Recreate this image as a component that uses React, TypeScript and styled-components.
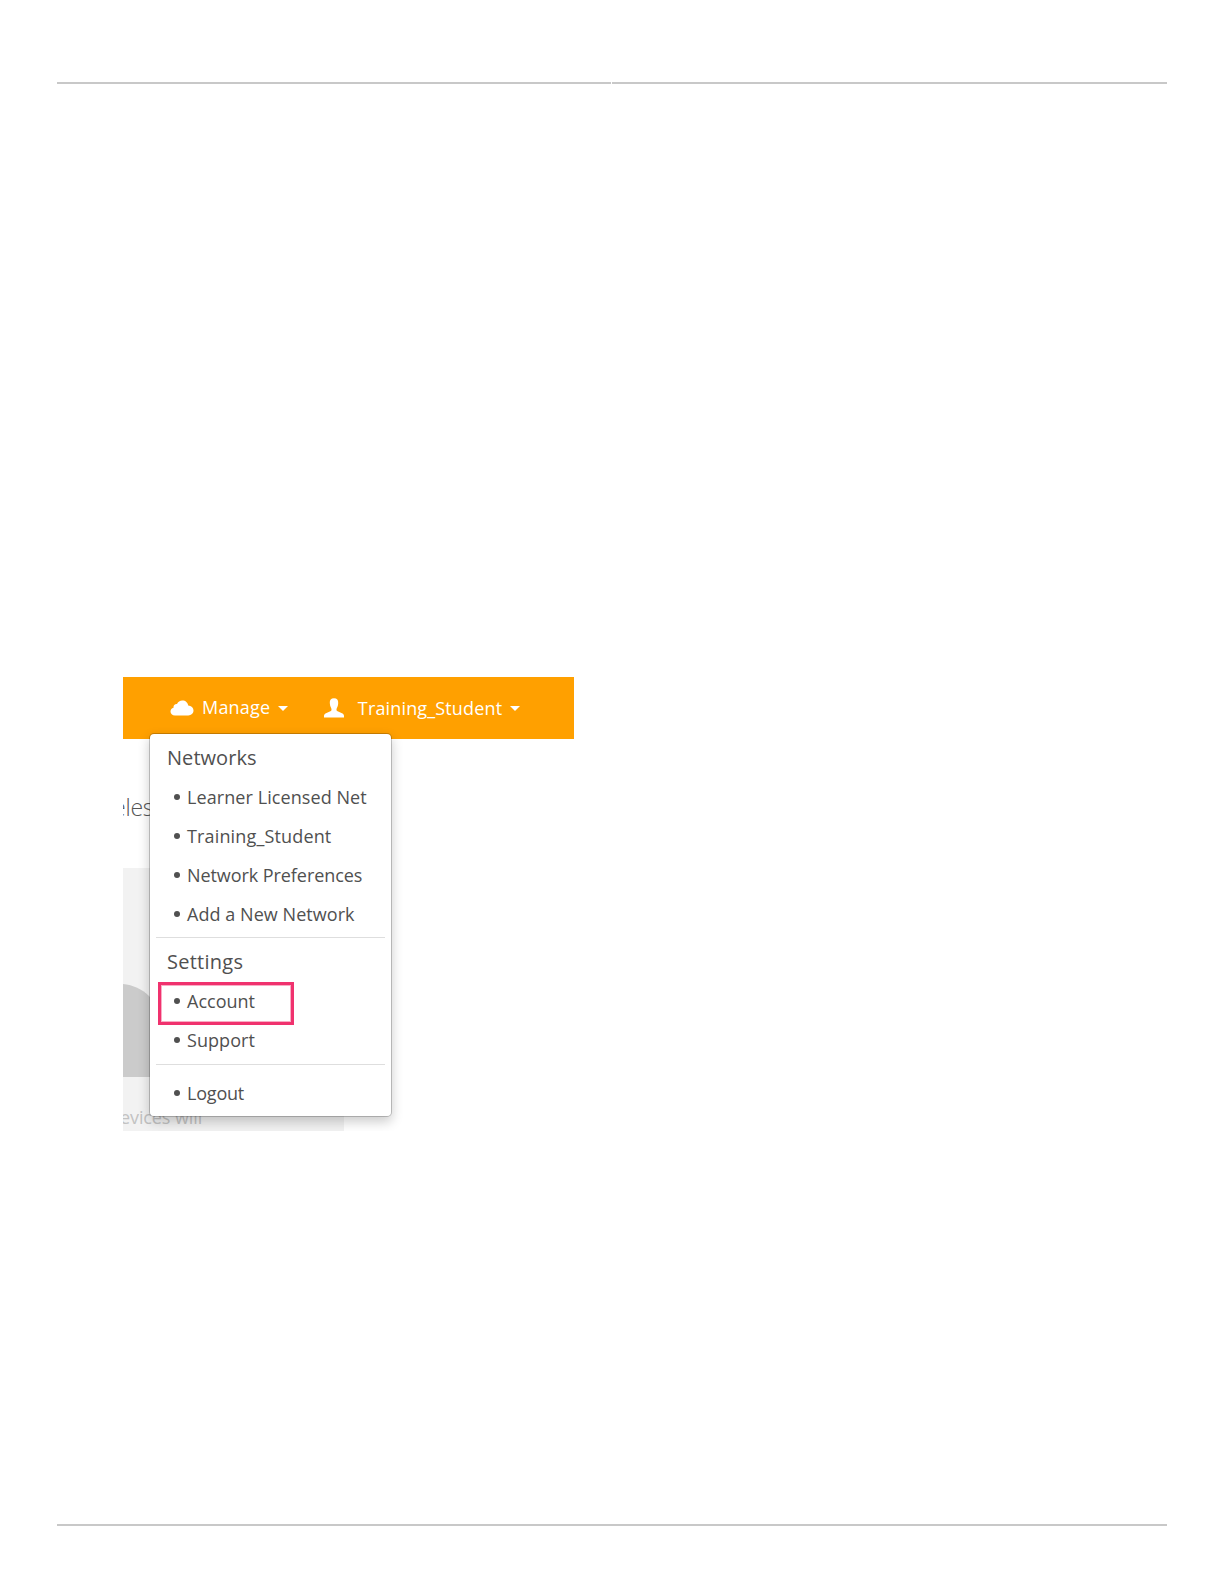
import React from "react";
import styled, { createGlobalStyle } from "styled-components";

const GlobalStyle = createGlobalStyle`
  *, *::before, *::after { box-sizing: border-box; }
  body { margin: 0; background: #fff; }
`;

const Page = styled.main`
  width: 1224px;
  height: 1584px;
  padding: 82px 57px 58px;
  display: flex;
  flex-direction: column;
  background: #fff;
  font-family: "Open Sans", "Noto Sans", sans-serif;
`;

const HeaderRule = styled.header`
  display: grid;
  grid-template-columns: 554px 1fr;
  gap: 1px;
`;

const Rule = styled.div`
  flex: 1;
  height: 2px;
  background: #c8c8c8;
`;

const Footer = styled.footer`
  display: flex;
  margin-top: auto;
`;

const Figure = styled.section`
  position: relative;
  width: 451px;
  height: 454px;
  margin: 593px 0 0 66px;
  overflow: hidden;
`;

const NavBar = styled.nav`
  display: flex;
  height: 62px;
  padding-left: 47px;
  background: #ffa000;
  color: #fff;
`;

const NavItem = styled.div<{ $left?: number; $gap: number; $top?: number }>`
  display: flex;
  align-items: center;
  height: 62px;
  margin-left: ${(p) => p.$left ?? 0}px;

  svg { display: block; flex: none; }
  span { margin: ${(p) => p.$top ?? 0}px 8px 0 ${(p) => p.$gap}px; }
`;

const NavLabel = styled.span<{ $spacing: number }>`
  padding-bottom: 2px;
  font-size: 18px;
  font-weight: 500;
  line-height: 24px;
  letter-spacing: ${(p) => p.$spacing}px;
  white-space: nowrap;
`;

const Caret = styled.i`
  border: 5px solid transparent;
  border-top-color: #fff;
  border-bottom: 0;
  margin-top: 1px;
`;

const Backdrop = styled.div`
  display: flex;
  flex-direction: column;
`;

const Heading = styled.div`
  height: 129px;
  padding-top: 53px;
  margin-left: -10px;
  font-size: 23px;
  font-weight: 300;
  line-height: 30px;
  letter-spacing: -0.2px;
  color: #555;
`;

const Panel = styled.div`
  width: 221px;
  height: 263px;
  padding-top: 116px;
  background: #f2f2f2;
  color: #c2c2c2;
  font-size: 18px;
  line-height: 24px;

  svg { display: block; }
  p { margin: 28px 0 0 -3px; letter-spacing: -0.1px; }
`;

const Menu = styled.div`
  position: absolute;
  left: 26px;
  top: 56px;
  width: 243px;
  height: 384px;
  padding: 12px 6px;
  border: 1px solid rgba(0, 0, 0, 0.2);
  border-radius: 5px;
  background: #fff;
  background-clip: padding-box;
  box-shadow: 0 5px 12px rgba(0, 0, 0, 0.2);
  color: #505050;
`;

const GroupTitle = styled.h2<{ $spacing: number }>`
  margin: 0 0 0 11px;
  height: 24px;
  font-size: 20px;
  font-weight: 400;
  line-height: 24px;
  letter-spacing: ${(p) => p.$spacing}px;
`;

const List = styled.ul<{ $top?: number }>`
  list-style: none;
  margin: ${(p) => p.$top ?? 8}px 0 0;
  padding: 0;
`;

const Item = styled.li<{ $spacing: number }>`
  position: relative;
  display: flex;
  align-items: center;
  height: 39px;
  padding: 0 0 2px 18px;
  font-size: 18px;
  line-height: 24px;
  letter-spacing: ${(p) => p.$spacing}px;
  white-space: nowrap;

  &::before {
    content: "";
    width: 6px;
    height: 6px;
    margin: 1px 7px 0 0;
    border-radius: 50%;
    background: #505050;
  }
`;

const Divider = styled.hr<{ $top?: number }>`
  height: 1px;
  margin: ${(p) => p.$top ?? 3}px 0 12px;
  border: 0;
  background: #dedede;
`;

const Highlight = styled.div`
  position: absolute;
  left: 2px;
  top: 0;
  width: 136px;
  height: 43px;
  border: 3px solid #f0326e;
  outline: 1px solid rgba(240, 50, 110, 0.4);
  outline-offset: -4px;
`;

const CloudIcon = () => (
  <svg width="24" height="16" viewBox="0 0 24 16" fill="#fff">
    <path d="M5 15.5C2.2 15.5.5 13.8.5 11.5c0-2 1.2-3.4 3-3.8C3.3 5.3 5 3.9 7 4.1 8 1.9 9.9.6 12.3.6c3.3 0 5.5 2.1 5.9 5 3 .1 5.3 2.2 5.3 5 0 2.9-2.3 4.9-5.2 4.9z" />
  </svg>
);

const UserIcon = () => (
  <svg width="20" height="20" viewBox="0 0 20 20" fill="#fff">
    <path d="M10 .3c-3 0-4.4 1.8-4.2 4.7.1 2 .5 3.6 1.2 4.8.7 1.4.7 2.6-.1 3.2L2 15.2C.5 15.9 0 16.8 0 18.1v1.5h20v-1.5c0-1.3-.5-2.2-2-2.9L13.1 13c-.8-.6-.8-1.8-.1-3.2.7-1.2 1.1-2.8 1.2-4.8C14.4 2.1 13 .3 10 .3z" />
  </svg>
);

const networks = [
  { label: "Learner Licensed Net", spacing: 0.08 },
  { label: "Training_Student", spacing: 0.15 },
  { label: "Network Preferences", spacing: -0.07 },
  { label: "Add a New Network", spacing: 0.05 },
];

export default function App() {
  return (
    <>
      <GlobalStyle />
      <Page>
        <HeaderRule>
          <Rule />
          <Rule />
        </HeaderRule>
        <Figure>
          <NavBar>
            <NavItem $gap={8}>
              <CloudIcon />
              <NavLabel $spacing={0.2}>Manage</NavLabel>
              <Caret />
            </NavItem>
            <NavItem $left={36} $gap={13.5} $top={2}>
              <UserIcon />
              <NavLabel $spacing={0.15}>Training_Student</NavLabel>
              <Caret />
            </NavItem>
          </NavBar>
          <Backdrop>
            <Heading>eless</Heading>
            <Panel>
              <svg width="40" height="93" viewBox="0 0 40 93">
                <path d="M0 0C10 1 19 5 26 12C30 16 33 20 36 25V93H0z" fill="#cbcbcb" />
              </svg>
              <p>evices will</p>
            </Panel>
          </Backdrop>
          <Menu>
            <GroupTitle $spacing={0.05}>Networks</GroupTitle>
            <List>
              {networks.map((n) => (
                <Item key={n.label} $spacing={n.spacing}>{n.label}</Item>
              ))}
            </List>
            <Divider />
            <GroupTitle $spacing={0.25}>Settings</GroupTitle>
            <List>
              <Item $spacing={0}>
                Account
                <Highlight />
              </Item>
              <Item $spacing={0.05}>Support</Item>
            </List>
            <Divider $top={4} />
            <List $top={-3}>
              <Item $spacing={-0.2}>Logout</Item>
            </List>
          </Menu>
        </Figure>
        <Footer>
          <Rule />
        </Footer>
      </Page>
    </>
  );
}
